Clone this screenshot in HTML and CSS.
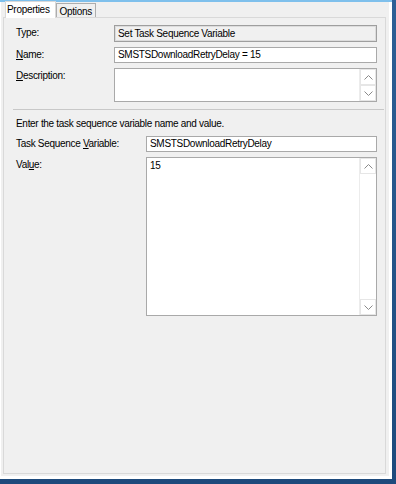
FILE: index.html
```html
<html>
    <head>
        <meta name="viewport" content="width=device-width, initial-scale=1.0">
        <link rel="stylesheet" href="styles.css">
    </head>
    <body>
        <div class="window">
            <div class="dialog">
                <div class="tabs">
                    <div class="tab active">Properties</div>
                    <div class="tab">Options</div>
                </div>
                <div class="page">
                    <div class="form">
                        <span class="label">Type:</span>
                        <div class="field readonly">Set Task Sequence Variable</div>

                        <span class="label"><u>N</u>ame:</span>
                        <div class="field">SMSTSDownloadRetryDelay = 15</div>

                        <span class="label"><u>D</u>escription:</span>
                        <div class="field memo desc">
                            <div class="text"></div>
                            <div class="scroll">
                                <div class="arrow"><svg width="9" height="5" viewBox="0 0 9 5"><polyline points="0.5,4.5 4.5,0.5 8.5,4.5" fill="none" stroke="#8a8a8a" stroke-width="1"/></svg></div>
                                <div class="arrow"><svg width="9" height="5" viewBox="0 0 9 5"><polyline points="0.5,0.5 4.5,4.5 8.5,0.5" fill="none" stroke="#8a8a8a" stroke-width="1"/></svg></div>
                            </div>
                        </div>
                    </div>

                    <div class="sep"></div>

                    <p class="intro">Enter the task sequence variable name and value.</p>

                    <div class="form second">
                        <span class="label">Task Sequence <u>V</u>ariable:</span>
                        <div class="field">SMSTSDownloadRetryDelay</div>

                        <span class="label">Val<u>u</u>e:</span>
                        <div class="field memo value">
                            <div class="text">15</div>
                            <div class="scroll">
                                <div class="arrow"><svg width="9" height="5" viewBox="0 0 9 5"><polyline points="0.5,4.5 4.5,0.5 8.5,4.5" fill="none" stroke="#8a8a8a" stroke-width="1"/></svg></div>
                                <div class="track"></div>
                                <div class="arrow"><svg width="9" height="5" viewBox="0 0 9 5"><polyline points="0.5,0.5 4.5,4.5 8.5,0.5" fill="none" stroke="#8a8a8a" stroke-width="1"/></svg></div>
                            </div>
                        </div>
                    </div>
                </div>
            </div>
        </div>
    </body>
</html>
```

FILE: styles.css
```css
body {
    margin: 0;
    width: 396px;
    height: 484px;
    background: linear-gradient(to bottom, #2d5f95, #1d4a7c);
    font-family: "Liberation Sans", Arial, sans-serif;
    font-size: 10px;
    letter-spacing: -0.3px;
    color: #000;
}

div.window {
    width: 392px;
    height: 479px;
    box-sizing: border-box;
    background: #fff;
    border-top: 2px solid #7fc0ec;
    padding: 0 3px 3px 1px;
}

div.dialog {
    height: 100%;
    background: #f0f0f0;
    display: flex;
    flex-direction: column;
}

div.tabs {
    display: flex;
    align-items: flex-end;
    height: 15px;
    padding-left: 4px;
    position: relative;
    z-index: 1;
}

div.tab {
    height: 13px;
    padding: 0 3px 0 3px;
    line-height: 15px;
    border: 1px solid #adadad;
    border-bottom: none;
    background: #f0f0f0;
}

div.tab.active {
    height: 16px;
    line-height: 15px;
    background: #fff;
    border-color: #d9d9d9;
    margin-bottom: -1px;
    padding: 0 5px 0 1px;
}

div.page {
    flex: 1;
    margin: 0 3px 2px 2px;
    border: 1px solid #d9d9d9;
    padding: 7px 8px 0 11px;
}

div.form {
    display: grid;
    grid-template-columns: 99px 1fr;
    row-gap: 5px;
}

div.form.second {
    grid-template-columns: 131px 1fr;
    row-gap: 5px;
}

span.label {
    padding-left: 1px;
    padding-top: 2px;
}

div.field {
    height: 16px;
    box-sizing: border-box;
    border: 1px solid #a9a9a9;
    background: #fff;
    padding: 0 3px;
    line-height: 14px;
}

div.field.readonly {
    height: 17px;
    background: #f0f0f0;
    border: 1px solid #9e9e9e;
    box-shadow: inset 0 0 0 1px #dcdcdc;
    line-height: 15px;
}

div.field.memo {
    display: flex;
    padding: 0 0 0 3px;
}

div.field.desc {
    height: 34px;
}

div.field.value {
    height: 159px;
}

div.memo div.text {
    flex: 1;
    padding-top: 1px;
}

div.scroll {
    width: 16px;
    display: flex;
    flex-direction: column;
    border-left: 1px solid #ececec;
}

div.arrow {
    height: 16px;
    box-sizing: border-box;
    border: 1px solid #e6e6e6;
    display: flex;
    align-items: center;
    justify-content: center;
}

div.track {
    flex: 1;
}

div.sep {
    height: 0;
    border-top: 1px solid #c8c8c8;
    margin: 7px -7px 0 -2px;
}

p.intro {
    margin: 8px 0 7px 1px;
}
```
